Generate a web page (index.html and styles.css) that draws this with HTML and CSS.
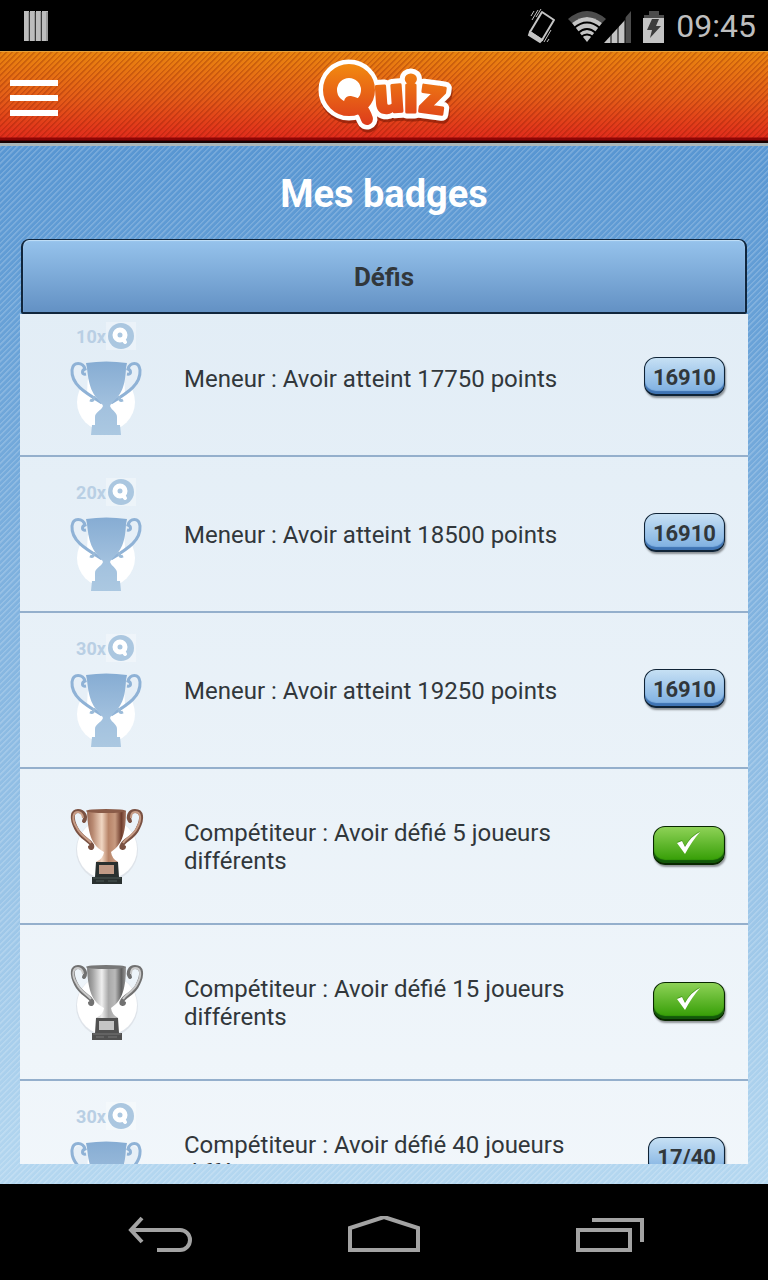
FILE: index.html
```html
<!DOCTYPE html>
<html lang="fr">
<head>
    <meta charset="UTF-8">
    <meta name="viewport" content="width=device-width, initial-scale=1">
    <title>Quiz - Mes badges</title>
    <link rel="stylesheet" href="styles.css">
</head>
<body>
    <!-- shared shapes -->
    <svg class="defs" width="0" height="0" aria-hidden="true">
        <defs>
            <linearGradient id="blueCup" x1="0" y1="0" x2="0" y2="1">
                <stop offset="0" stop-color="#86acd3"/>
                <stop offset=".6" stop-color="#a2c1de"/>
                <stop offset="1" stop-color="#abc8e1"/>
            </linearGradient>
            <linearGradient id="bronzeCup" x1="0" y1="0" x2="1" y2="0">
                <stop offset="0" stop-color="#9a6a55"/>
                <stop offset=".15" stop-color="#b98a72"/>
                <stop offset=".38" stop-color="#f0d6c2"/>
                <stop offset=".55" stop-color="#b88468"/>
                <stop offset=".72" stop-color="#c79a80"/>
                <stop offset=".88" stop-color="#6e3c2c"/>
                <stop offset="1" stop-color="#a87a66"/>
            </linearGradient>
            <linearGradient id="silverCup" x1="0" y1="0" x2="1" y2="0">
                <stop offset="0" stop-color="#7e7e7e"/>
                <stop offset=".15" stop-color="#a5a5a5"/>
                <stop offset=".38" stop-color="#efefef"/>
                <stop offset=".55" stop-color="#a8a8a8"/>
                <stop offset=".72" stop-color="#b9b9b9"/>
                <stop offset=".88" stop-color="#5f5f5f"/>
                <stop offset="1" stop-color="#999999"/>
            </linearGradient>
            <symbol id="trophyBlue" viewBox="0 0 80 76">
                <circle cx="40" cy="42" r="29" fill="#ffffff"/>
                <path d="M7 12 C7 20 12 28 21 33 L22 15 L19 11 C17 5 9 4 7 12 Z M73 12 C73 20 68 28 59 33 L58 15 L61 11 C63 5 71 4 73 12 Z" fill="#e6eff7"/>
                <path d="M20 14 C15 15 16 10 19 9 C17 2 7 1 6 10 C5 24 18 32 36 43 M61 14 C66 15 65 10 62 9 C64 2 73 1 74 10 C75 24 63 32 45 43" fill="none" stroke="#8fb2d6" stroke-width="3"/>
                <path d="M24 40 q4 2 4 -4 M57 40 q-4 2 -4 -4" fill="none" stroke="#9bbbd9" stroke-width="3"/>
                <path d="M20 3 Q40 0 61 3 L60 8 C59 27 56 34 45 44 L44 46 C46 51 51 52 51 57 V65 H54 L55 75 H25 L26 65 H29 V57 C29 52 35 51 37 46 L36 44 C26 34 23 27 21 8 Z" fill="url(#blueCup)"/>
            </symbol>
            <symbol id="trophyBronze" viewBox="0 0 80 78">
                <circle cx="41" cy="42" r="31" fill="#dfe4ea"/>
                <circle cx="41" cy="41" r="30" fill="#ffffff"/>
                <path d="M18 13 C21 8 17 3 12 3 C6 3 5 10 10 20 C15 30 22 31 26 37 C27 40 25 41 24 39 M64 13 C61 8 64 3 69 3 C76 3 77 10 72 20 C68 30 59 31 56 37 C54 40 57 41 58 39" fill="none" stroke="#7a5142" stroke-width="4" stroke-linecap="round"/>
                <path d="M17 10 C17 6 14 4 12 4 C7 4 5 11 11 20 C15 28 21 30 25 35 M65 10 C65 6 67 4 69 4 C75 4 76 11 71 20 C67 28 60 30 57 35" fill="none" stroke="#c79c86" stroke-width="2"/>
                <path d="M21 3 H60 C60 29 54 38 45 44 Q46 51 52 54 H30 Q37 51 38 44 C27 38 22 29 21 3 Z" fill="url(#bronzeCup)"/>
                <ellipse cx="40" cy="3" rx="20" ry="2" fill="#8a5b48"/>
                <path d="M30 54 H52 L53 69 H56 V76 H26 V69 H29 Z" fill="#29302f"/>
                <rect x="33" y="57" width="15" height="9" fill="#c09a86"/>
                <path d="M27 70 H55 M30 73 H38 M42 73 H51" stroke="#4d5957" stroke-width="1"/>
            </symbol>
            <symbol id="trophySilver" viewBox="0 0 80 78">
                <circle cx="41" cy="42" r="31" fill="#dfe4ea"/>
                <circle cx="41" cy="41" r="30" fill="#ffffff"/>
                <path d="M18 13 C21 8 17 3 12 3 C6 3 5 10 10 20 C15 30 22 31 26 37 C27 40 25 41 24 39 M64 13 C61 8 64 3 69 3 C76 3 77 10 72 20 C68 30 59 31 56 37 C54 40 57 41 58 39" fill="none" stroke="#717171" stroke-width="4" stroke-linecap="round"/>
                <path d="M17 10 C17 6 14 4 12 4 C7 4 5 11 11 20 C15 28 21 30 25 35 M65 10 C65 6 67 4 69 4 C75 4 76 11 71 20 C67 28 60 30 57 35" fill="none" stroke="#c9c9c9" stroke-width="2"/>
                <path d="M21 3 H60 C60 29 54 38 45 44 Q46 51 52 54 H30 Q37 51 38 44 C27 38 22 29 21 3 Z" fill="url(#silverCup)"/>
                <ellipse cx="40" cy="3" rx="20" ry="2" fill="#777777"/>
                <path d="M30 54 H52 L53 69 H56 V76 H26 V69 H29 Z" fill="#505050"/>
                <rect x="33" y="57" width="15" height="9" fill="#c4c4c4"/>
                <path d="M27 70 H55 M30 73 H38 M42 73 H51" stroke="#777777" stroke-width="1"/>
            </symbol>
            <symbol id="coin" viewBox="0 0 30 28">
                <rect width="30" height="28" fill="#ffffff" opacity=".3"/>
                <circle cx="15" cy="14" r="13" fill="#abc7e0"/>
                <circle cx="14" cy="13" r="5" fill="none" stroke="#ffffff" stroke-width="5"/>
                <path d="M17 17 L19 20" stroke="#ffffff" stroke-width="4" stroke-linecap="round"/>
            </symbol>
            <symbol id="check" viewBox="0 0 24 24">
                <path d="M0 11 L5 9 L8 15 Q14 4 23 0 Q15 9 8 22 Z" fill="#2f7f08" opacity=".6"/>
                <path d="M0 12 L5 10 L8 16 Q14 5 23 1 Q15 10 8 23 Z" fill="#ffffff"/>
            </symbol>
        </defs>
    </svg>

    <div class="status-bar">
        <svg class="notification" width="24" height="30" viewBox="0 0 24 30">
            <path d="M0 0 H5 V30 H0 Z M6 0 H11 V30 H6 Z M12 0 H17 V30 H12 Z M18 0 H24 V30 H18 Z" fill="#bdbdbd"/>
            <path d="M5 1 V30 M11 1 V30 M17 1 V30 M23 1 V30" stroke="#777777" stroke-width="1"/>
        </svg>
        <div class="status-icons">
            <svg width="30" height="36" viewBox="0 0 30 36">
                <path d="M15 4 L27 12 L15 32 L3 24 Z" fill="none" stroke="#c4c4c4" stroke-width="2" stroke-linejoin="round"/>
                <path d="M3 24 L15 32 L13 34 L2 27 Z" fill="#c4c4c4" stroke="#c4c4c4" stroke-width="2"/>
                <path d="M11 2 L5 12 M7 3 L4 8 M14 1 L9 9 M24 22 L17 34 M22 31 L20 34" stroke="#c4c4c4" stroke-width="1"/>
            </svg>
            <svg width="64" height="36" viewBox="0 0 64 36">
                <path d="M0 11 Q19 -5 38 11 L34 15 Q19 3 4 15 Z" fill="#4c4c4c"/>
                <path d="M4 15 Q19 3 34 15 L19 34 Z" fill="#c4c4c4"/>
                <path d="M6 20 Q19 9 32 20 M10 25 Q19 17 28 25 M13 29 Q19 24 25 29" fill="none" stroke="#000000" stroke-width="2"/>
                <path d="M57 10 L63 3 V35 H57 Z" fill="#4c4c4c"/>
                <path d="M36 35 L57 12 V35 Z" fill="#c4c4c4"/>
                <path d="M43 20 V36 M50 14 V36 M57 8 V36" stroke="#000000" stroke-width="1"/>
            </svg>
            <svg width="22" height="36" viewBox="0 0 22 36">
                <path d="M6 3 H16 V7 H21 V10 H1 V7 H6 Z" fill="#4c4c4c"/>
                <rect x="0" y="10" width="21" height="25" fill="#c4c4c4"/>
                <path d="M9 11 H16 L13 18 H18 L7 30 L9 22 H4 Z" fill="#3c3c3c"/>
            </svg>
            <span class="clock">09:45</span>
        </div>
    </div>

    <header class="app-header">
        <button type="button" class="menu-button" aria-label="Menu">
            <span></span>
            <span></span>
            <span></span>
        </button>
        <svg class="logo" width="140" height="80" viewBox="0 0 140 80" role="img" aria-label="Quiz">
            <defs>
                <linearGradient id="logoFill" gradientUnits="userSpaceOnUse" x1="0" y1="8" x2="0" y2="70">
                    <stop offset="0" stop-color="#f28a10"/>
                    <stop offset="1" stop-color="#dd3a1c"/>
                </linearGradient>
                <g id="logoWord">
                    <g class="logo-ring">
                        <ellipse cx="35" cy="34" rx="19" ry="19"/>
                    </g>
                    <path class="logo-tail" d="M36 46 Q48 48 53 63"/>
                    <g class="logo-letters">
                        <text x="62" y="57" transform="rotate(-4 62 57)">u</text>
                        <text x="90" y="56">i</text>
                        <text x="104" y="55" transform="rotate(8 104 55)">z</text>
                    </g>
                </g>
            </defs>
            <use href="#logoWord" class="logo-shadow" x="1" y="3"/>
            <use href="#logoWord" class="logo-outline"/>
            <use href="#logoWord" class="logo-face"/>
        </svg>
    </header>

    <main class="content">
        <h1>Mes badges</h1>
        <section class="card">
            <h2>Défis</h2>
            <div class="list-view">
                <ul class="badge-list">
                    <li>
                        <div class="trophy">
                            <div class="count">10x<svg width="30" height="28"><use href="#coin"/></svg></div>
                            <svg width="80" height="76"><use href="#trophyBlue"/></svg>
                        </div>
                        <p>Meneur : Avoir atteint 17750 points</p>
                        <span class="score">16910</span>
                    </li>
                    <li>
                        <div class="trophy">
                            <div class="count">20x<svg width="30" height="28"><use href="#coin"/></svg></div>
                            <svg width="80" height="76"><use href="#trophyBlue"/></svg>
                        </div>
                        <p>Meneur : Avoir atteint 18500 points</p>
                        <span class="score">16910</span>
                    </li>
                    <li>
                        <div class="trophy">
                            <div class="count">30x<svg width="30" height="28"><use href="#coin"/></svg></div>
                            <svg width="80" height="76"><use href="#trophyBlue"/></svg>
                        </div>
                        <p>Meneur : Avoir atteint 19250 points</p>
                        <span class="score">16910</span>
                    </li>
                    <li>
                        <div class="trophy">
                            <svg width="80" height="78"><use href="#trophyBronze"/></svg>
                        </div>
                        <p>Compétiteur : Avoir défié 5 joueurs différents</p>
                        <span class="score done"><svg width="24" height="24"><use href="#check"/></svg></span>
                    </li>
                    <li>
                        <div class="trophy">
                            <svg width="80" height="78"><use href="#trophySilver"/></svg>
                        </div>
                        <p>Compétiteur : Avoir défié 15 joueurs différents</p>
                        <span class="score done"><svg width="24" height="24"><use href="#check"/></svg></span>
                    </li>
                    <li>
                        <div class="trophy">
                            <div class="count">30x<svg width="30" height="28"><use href="#coin"/></svg></div>
                            <svg width="80" height="76"><use href="#trophyBlue"/></svg>
                        </div>
                        <p>Compétiteur : Avoir défié 40 joueurs différents</p>
                        <span class="score">17/40</span>
                    </li>
                </ul>
            </div>
        </section>
    </main>

    <nav class="nav-bar">
        <button type="button" aria-label="Retour">
            <svg width="72" height="40" viewBox="0 0 72 40">
                <path d="M20 2 L9 14 L20 26 M9 14 H58 A10 10 0 0 1 58 34 H35" fill="none" stroke="#a3a3a3" stroke-width="4"/>
            </svg>
        </button>
        <button type="button" aria-label="Accueil">
            <svg width="72" height="40" viewBox="0 0 72 40">
                <path d="M2 34 V12 L36 1 L70 12 V34 Z" fill="none" stroke="#a3a3a3" stroke-width="4"/>
            </svg>
        </button>
        <button type="button" aria-label="Applications récentes">
            <svg width="72" height="40" viewBox="0 0 72 40">
                <path d="M4 14 H56 V34 H4 Z M18 4 H68 V26" fill="none" stroke="#a3a3a3" stroke-width="4"/>
            </svg>
        </button>
    </nav>
</body>
</html>
```
FILE: styles.css
```css
* {
    box-sizing: border-box;
}

body {
    display: flex;
    flex-direction: column;
    height: 100vh;
    margin: 0;
    background-color: #000000;
    color: #31373b;
    font-family: Roboto, "Liberation Sans", sans-serif;
}

h1, h2, p, ul {
    margin: 0;
    padding: 0;
}

button {
    padding: 0;
    border: none;
    background: none;
    cursor: pointer;
}

svg {
    display: block;
}

.defs {
    position: absolute;
}

/* status bar */
.status-bar {
    display: flex;
    flex: none;
    align-items: center;
    justify-content: space-between;
    height: 51px;
    padding: 0 12px 0 24px;
}

.status-icons {
    display: flex;
    align-items: center;
    gap: 11px;
}

.clock {
    color: #bebebe;
    font-size: 32px;
    line-height: 50px;
}

/* orange header */
.app-header {
    display: flex;
    flex: none;
    position: relative;
    align-items: center;
    justify-content: center;
    height: 95px;
    border-top: 1px solid #e5a03c;
    border-bottom: 3px solid #a9b5b8;
    background:
        linear-gradient(to top, #180000 0, #180000 2px, #8d0505 3px, #8d0505 5px, transparent 6px),
        repeating-linear-gradient(135deg, rgba(120, 20, 0, 0.26) 0, rgba(120, 20, 0, 0.26) 1px, transparent 2px, transparent 4px),
        linear-gradient(#ea850f, #e45d18 50%, #e1261c);
}

.menu-button {
    display: flex;
    flex-direction: column;
    position: absolute;
    left: 10px;
    gap: 9px;
}

.menu-button span {
    width: 48px;
    height: 6px;
    background-color: #ffffff;
}

.logo {
    margin-bottom: 4px;
    overflow: visible;
}

.logo use {
    stroke-linecap: round;
    stroke-linejoin: round;
}

.logo-ring {
    fill: var(--hole);
    stroke-width: var(--ring);
}

.logo-tail {
    fill: none;
    stroke-width: var(--tail);
}

.logo-letters {
    font-family: Roboto, sans-serif;
    font-size: 50px;
    font-weight: 900;
    stroke-width: var(--letter);
}

.logo-shadow,
.logo-outline {
    --hole: #ffffff;
    --ring: 23px;
    --tail: 21px;
    --letter: 13px;
}

.logo-shadow {
    fill: #7c1a06;
    stroke: #7c1a06;
    opacity: 0.6;
}

.logo-outline {
    fill: #ffffff;
    stroke: #ffffff;
}

.logo-face {
    --hole: none;
    --ring: 14px;
    --tail: 12px;
    --letter: 3px;
    fill: url(#logoFill);
    stroke: url(#logoFill);
}

/* page */
.content {
    display: flex;
    flex: 1;
    flex-direction: column;
    min-height: 0;
    padding: 0 20px 20px;
    background:
        repeating-linear-gradient(135deg, rgba(255, 255, 255, 0.18) 0, rgba(255, 255, 255, 0.18) 1px, transparent 2px, transparent 4px),
        linear-gradient(#5896d2, #b4d7f0);
}

h1 {
    padding: 24px 0 21px;
    color: #ffffff;
    font-size: 38px;
    line-height: 48px;
    text-align: center;
}

.card {
    display: flex;
    flex: 1;
    flex-direction: column;
    min-height: 0;
}

h2 {
    flex: none;
    height: 75px;
    margin: 0 1px;
    border: 2px solid #10263d;
    border-top-width: 1px;
    border-radius: 8px 8px 2px 2px;
    background: linear-gradient(#96c3ec, #6391c4);
    box-shadow: inset 0 1px 1px #c3e0f8;
    font-size: 26px;
    line-height: 74px;
    text-align: center;
}

.list-view {
    flex: 1;
    min-height: 0;
    overflow: hidden;
}

/* list is scrolled a little under its title */
.badge-list {
    margin-top: -13px;
    background: linear-gradient(#e2edf6, #f2f7fb);
    list-style: none;
}

.badge-list li {
    display: flex;
    align-items: center;
    height: 156px;
    padding: 0 23px 0 46px;
    border-bottom: 2px solid #94afcc;
}

.trophy {
    display: flex;
    flex: none;
    flex-direction: column;
    align-items: center;
    gap: 10px;
    width: 80px;
    padding-top: 2px;
}

.count {
    display: flex;
    align-items: center;
    color: #b9cfe4;
    font-size: 18px;
    font-weight: bold;
}

.badge-list p {
    flex: 1;
    margin: 0 16px 0 38px;
    padding-top: 2px;
    font-size: 24px;
    line-height: 28px;
}

.score {
    display: flex;
    flex: none;
    align-items: center;
    justify-content: center;
    height: 39px;
    margin-bottom: 3px;
    padding: 2px 8px 0;
    border: 1px solid #0f2336;
    border-bottom-width: 2px;
    border-radius: 12px;
    background: linear-gradient(#c6e0f4, #7aade0);
    box-shadow: inset 0 -3px 1px #3f74b4, 1px 2px 2px rgba(0, 0, 0, 0.4);
    font-size: 22px;
    font-weight: bold;
}

.score.done {
    width: 72px;
    margin-bottom: 2px;
    padding: 0 0 4px;
    border-color: #082700;
    background: linear-gradient(#8ed257, #2f9a00);
    box-shadow: inset 0 -3px 1px #12580a, 1px 2px 2px rgba(0, 0, 0, 0.4);
}

/* android buttons */
.nav-bar {
    display: flex;
    flex: none;
    align-items: center;
    justify-content: center;
    gap: 154px;
    height: 96px;
    padding-top: 7px;
}
```
